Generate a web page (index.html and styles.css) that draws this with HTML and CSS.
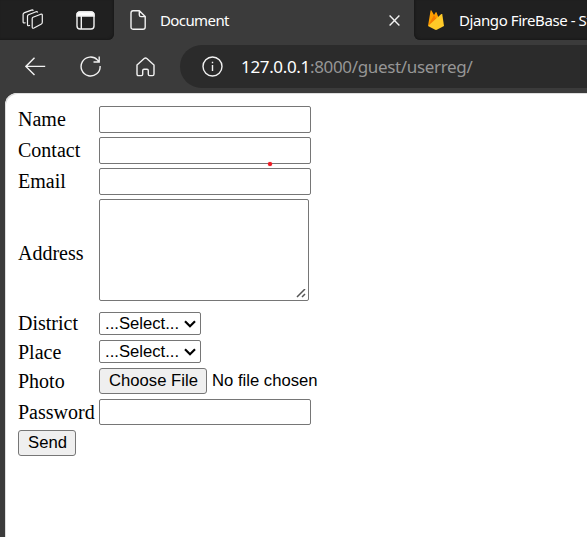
FILE: index.html
```html
<!DOCTYPE html>
<html lang="en">
<head>
<meta charset="utf-8">
<title>Document</title>
<link rel="stylesheet" href="styles.css">
</head>
<body>
<div class="browser">
  <header class="tabs">
    <div class="tab-tools">
      <svg class="workspaces" width="22" height="22" viewBox="0 0 22 22"><path d="M11 8.2 18.8 5.2Q20.3 4.8 20.3 6.3V13.2Q20.3 14.6 19 15.3L12 19Q10.2 19.8 10.2 18V9.6Q10.2 8.6 11 8.2ZM8 16.2 6.8 16.7Q5.5 17 5.5 15.5V7.2Q5.5 6.2 6.5 5.7L14 2.8Q15.2 2.4 15.7 3.5M3.5 13.6 2.5 14Q1.1 14.2 1.1 12.7V5.4Q1.1 4.4 2 3.9L9.5 1.1Q10.8.6 11.3 1.7"/></svg>
      <svg class="vertical" width="19" height="19" viewBox="0 0 19 19"><rect x="1" y="1" width="17" height="17" rx="3"/><path class="solid" d="M1 5V4Q1 1 4 1H15Q18 1 18 4V5Z"/><path d="M5.3 5V18"/></svg>
    </div>
    <div class="tab active">
      <svg width="16" height="20" viewBox="0 0 16 20"><path d="M1 3Q1 .8 3 .8H9.3L15.2 6.6V17Q15.2 19.2 13 19.2H3Q1 19.2 1 17ZM9.3.8V5Q9.3 6.6 11 6.6H15.2"/></svg>
      <span class="tab-title">Document</span>
      <svg class="close" width="11" height="11" viewBox="0 0 11 11"><path d="M.6.6 10.4 10.4M10.4.6.6 10.4"/></svg>
    </div>
    <div class="tab idle">
      <svg class="flame" width="16" height="20" viewBox="0 0 16 20"><path fill="#ffa000" d="M0 16 2.6.5Q3 0 3.5.5L6 5 7.7 2.3Q8.2 1.8 8.6 2.4L11 9Z"/><path fill="#f57c00" d="M0 16 6 5 9 10Z"/><path fill="#ffca28" d="M0 16 13.3 4Q14 3.6 14.3 4.5L16 16 8.8 19.8Q8 20.1 7.2 19.8Z"/></svg>
      <span class="tab-title idle-title">Django FireBase - St</span>
    </div>
  </header>
  <nav class="toolbar">
    <svg class="back" width="21" height="19" viewBox="0 0 21 19"><path d="M9.5.8.9 9.4 9.5 18M1 9.4H20.2"/></svg>
    <svg class="reload" width="21" height="21" viewBox="0 0 21 21"><path d="M20.1 10A9.5 9.5 0 1 1 17.6 4.1L19.2 6M19.2.5V6H13.5"/></svg>
    <svg class="home" width="19" height="20" viewBox="0 0 19 20"><path d="M1 8.1 8.2 1.5Q9.5.4 10.8 1.5L18 8.1V17Q18 18.6 16.5 18.6H13.6Q12.3 18.6 12.3 17.2V13.7Q12.3 12.3 11 12.3H8Q6.7 12.3 6.7 13.7V17.2Q6.7 18.6 5.4 18.6H2.5Q1 18.6 1 17Z"/></svg>
    <div class="address">
      <svg width="21" height="21" viewBox="0 0 21 21"><circle cx="10.5" cy="10.5" r="9.5"/><path d="M10.5 9V15M10.5 5.8V7.2"/></svg>
      <span class="url"><span class="host">127.0.0.1</span>:8000/guest/userreg/</span>
    </div>
  </nav>
  <main class="page">
    <form class="form">
      <label for="name">Name</label><input id="name" class="field" type="text">
      <label for="contact">Contact</label><div class="marked"><input id="contact" class="field" type="text"><i class="dot"></i></div>
      <label for="email">Email</label><input id="email" class="field" type="text">
      <label class="tall" for="address">Address</label><div class="area" id="address"><svg width="10" height="9" viewBox="0 0 10 9"><path d="M1 8 9 0M6 8 9 5"/></svg></div>
      <label class="compact" for="district">District</label><div class="select" id="district"><span>...Select...</span><svg width="12" height="8" viewBox="0 0 12 8"><path d="M1 1.3 6 6.2 11 1.3"/></svg></div>
      <label class="compact place" for="place">Place</label><div class="select" id="place"><span>...Select...</span><svg width="12" height="8" viewBox="0 0 12 8"><path d="M1 1.3 6 6.2 11 1.3"/></svg></div>
      <label for="photo">Photo</label><div class="file"><button class="btn choose" id="photo" type="button">Choose File</button><span>No file chosen</span></div>
      <label for="password">Password</label><input id="password" class="field short" type="password">
      <button class="btn send" type="button">Send</button>
    </form>
  </main>
</div>
</body>
</html>
```
FILE: styles.css
```css
* { box-sizing: border-box; }
body { margin: 0; overflow: hidden; }
svg { display: block; flex: none; fill: none; stroke: #f2f2f2; stroke-width: 1.4; }
.browser { width: 587px; height: 537px; display: flex; flex-direction: column; overflow: hidden; background: #3b3b3b; }

.tabs { display: flex; height: 40px; font: 15px "Noto Sans", sans-serif; color: #fff; background: #3b3b3b; }
.tab-tools { width: 114px; padding-left: 22px; display: flex; align-items: center; background: #202020; border-bottom-right-radius: 6px; box-shadow: inset -1px -1px 2px #191919; }
.workspaces { stroke-width: 1.2; }
.vertical { margin-left: 32px; }
.vertical .solid { fill: #fff; }
.tab { display: flex; align-items: center; white-space: nowrap; overflow: hidden; }
.active { width: 300px; padding: 0 14px 0 16px; }
.active .tab-title { margin-left: 14px; letter-spacing: -.6px; }
.close { margin-left: auto; }
.idle { flex: 1; padding-left: 14px; background: #202020; border-bottom-left-radius: 6px; box-shadow: inset 1px -1px 2px #191919; }
.flame { stroke: none; }
.idle-title { margin-left: 15px; letter-spacing: -.42px; }
.tab-title { padding-bottom: 1px; }

.toolbar { display: flex; align-items: center; height: 53px; padding-left: 25px; }
.reload { margin-left: 34px; }
.home { margin-left: 35px; }
.address { flex: 1; height: 43px; margin-left: 25px; padding-left: 22px; display: flex; align-items: center; background: #2b2b2b; border-radius: 22px 0 0 22px; }
.url { margin-left: 18px; font: 17px "Noto Sans", sans-serif; letter-spacing: -.34px; color: #969696; white-space: nowrap; }
.host { color: #fff; }

.page { flex: 1; margin-left: 5px; padding: 13px 0 0 13px; background: #fff; border-top-left-radius: 12px; box-shadow: inset 1px 1px #dedede; }
.form { display: grid; grid-template-columns: 77px 230px; column-gap: 4px; row-gap: 4px; grid-template-rows: 27px 27px 27px 109px 24px 24px 27px 27px 26px; align-items: start; font: 20px/23px "Liberation Serif", serif; color: #000; }
.form label { padding-top: 2px; white-space: nowrap; }
.form .tall { padding-top: 43px; }
.form .compact { padding-top: 0; line-height: 22px; }
.form .place { padding-top: 1px; }
.field { display: block; width: 212px; height: 27px; margin: 0; border: 1px solid #767676; border-radius: 2px; background: #fff; outline: none; }
.short { height: 26px; }
.marked { position: relative; width: 212px; }
.dot { position: absolute; left: 169px; top: 25px; width: 4px; height: 4px; border-radius: 50%; background: #ed1c24; box-shadow: 0 0 1px #ed1c24; }
.area { display: flex; justify-content: flex-end; align-items: flex-end; width: 210px; height: 102px; padding: 2px; border: 1px solid #767676; border-radius: 2px; }
.area svg { stroke: #555; stroke-width: 1.5; }
.select, .file, .btn { font: 16.67px/19px "Liberation Sans", sans-serif; color: #000; white-space: nowrap; }
.select { display: flex; align-items: center; justify-content: space-between; width: 102px; height: 23px; padding: 0 4px 0 5px; border: 1px solid #767676; border-radius: 2px; }
.select svg { stroke: #000; stroke-width: 2.2; }
.file { display: flex; align-items: center; gap: 5px; }
.file span { padding-bottom: 1px; }
.btn { display: block; height: 26px; padding: 0 0 1px 1px; border: 1px solid #767676; border-radius: 3px; background: #efefef; }
.choose { width: 108px; }
.send { width: 58px; }
```
